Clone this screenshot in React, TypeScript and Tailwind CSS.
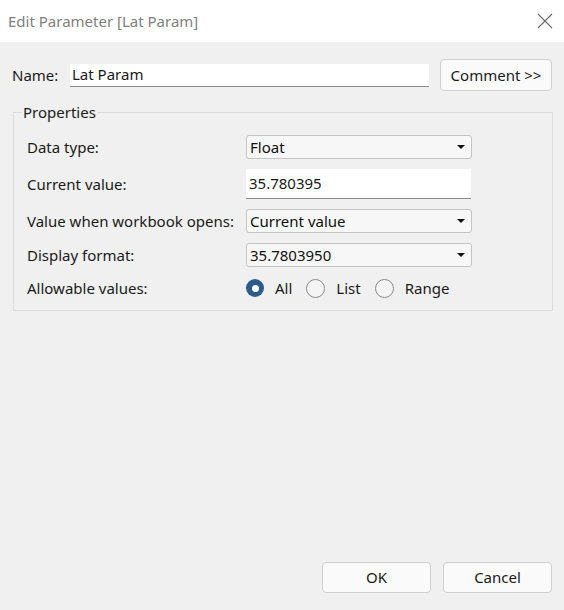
const font = "font-['Noto_Sans','Open_Sans',sans-serif]";

function Caret() {
  return (
    <svg width="8" height="4" viewBox="0 0 8 4" className="shrink-0">
      <path d="M0 0 L8 0 L4 4 Z" fill="#111" />
    </svg>
  );
}

function Dropdown({ value }: { value: string }) {
  return (
    <div className="flex h-[24px] w-[226px] items-center justify-between rounded-[3px] border border-[#c4c4c4] bg-[#f7f7f7] pl-[3px] pr-[6px] text-[15px] text-[#111]">
      <span>{value}</span>
      <Caret />
    </div>
  );
}

function Radio({ label, checked }: { label: string; checked?: boolean }) {
  return (
    <div className="flex items-center gap-[11px]">
      {checked ? (
        <span className="flex h-[18px] w-[18px] items-center justify-center rounded-full bg-[#2d5b8b]">
          <span className="h-[7px] w-[7px] rounded-full bg-white" />
        </span>
      ) : (
        <span className="h-[19px] w-[19px] rounded-full border border-[#8a8a8a] bg-[#f4f4f4]" />
      )}
      <span>{label}</span>
    </div>
  );
}

function Row({ label, children }: { label: string; children: React.ReactNode }) {
  return (
    <div className="flex items-center">
      <span className="w-[219px] shrink-0">{label}</span>
      {children}
    </div>
  );
}

export default function App() {
  return (
    <div className={`${font} flex h-[610px] w-[564px] flex-col bg-[#f0f0f0] text-[15px] text-[#1a1a1a]`}>
      {/* title bar */}
      <div className="flex h-[42px] items-center justify-between bg-white pl-[8px] pr-[11px]">
        <span className="text-[15px] text-[#808080]">Edit Parameter [Lat Param]</span>
        <svg width="16" height="16" viewBox="0 0 16 16">
          <path d="M1 1 L15 15 M15 1 L1 15" stroke="#6e6e6e" strokeWidth="1.2" />
        </svg>
      </div>

      <div className="flex flex-1 flex-col px-[12px]">
        {/* name row */}
        <div className="mt-[17px] flex items-center">
          <span className="w-[58px] shrink-0">Name:</span>
          <div className="flex h-[23px] w-[359px] items-center border-b border-[#8a8a8a] bg-white pl-[2px]">
            Lat Param
          </div>
          <button className="ml-[11px] h-[32px] w-[112px] rounded-[4px] border border-[#cfcfcf] bg-[#fafafa] text-[15px]">
            Comment &gt;&gt;
          </button>
        </div>

        {/* properties group */}
        <fieldset className="mt-[12px] ml-[1px] w-[540px] border border-[#dcdcdc]">
          <legend className="ml-[8px] px-[1px] leading-[18px]">Properties</legend>
          <div className="mt-[14px] flex flex-col pb-[10px] pl-[13px]">
            <Row label="Data type:">
              <Dropdown value="Float" />
            </Row>
            <div className="mt-[10px]">
              <Row label="Current value:">
                <div className="flex h-[30px] w-[225px] items-center border-b border-[#8a8a8a] bg-white pl-[3px]">
                  35.780395
                </div>
              </Row>
            </div>
            <div className="mt-[10px]">
              <Row label="Value when workbook opens:">
                <Dropdown value="Current value" />
              </Row>
            </div>
            <div className="mt-[10px]">
              <Row label="Display format:">
                <Dropdown value="35.7803950" />
              </Row>
            </div>
            <div className="mt-[10px]">
              <Row label="Allowable values:">
                <div className="flex items-center gap-[14px]">
                  <Radio label="All" checked />
                  <Radio label="List" />
                  <Radio label="Range" />
                </div>
              </Row>
            </div>
          </div>
        </fieldset>

        <div className="mt-auto mb-[17px] flex justify-end gap-[12px]">
          <button className="h-[31px] w-[109px] rounded-[4px] border border-[#cfcfcf] bg-[#fafafa] text-[15px]">
            OK
          </button>
          <button className="h-[31px] w-[109px] rounded-[4px] border border-[#cfcfcf] bg-[#fafafa] text-[15px]">
            Cancel
          </button>
        </div>
      </div>
    </div>
  );
}
